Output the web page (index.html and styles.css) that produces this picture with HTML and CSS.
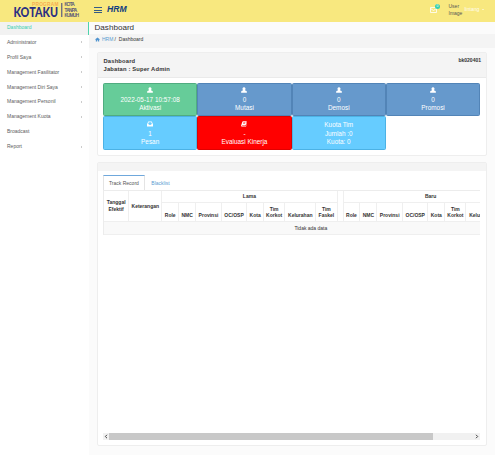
FILE: index.html
```html
<!DOCTYPE html>
<html lang="id">
<head>
    <meta charset="UTF-8">
    <meta name="viewport" content="width=device-width, initial-scale=1.0">
    <title>HRM - Dashboard</title>
    <link rel="stylesheet" href="styles.css">
</head>
<body>
    <!-- icons -->
    <svg width="0" height="0" class="defs">
        <symbol id="user" viewBox="0 0 12 12"><path d="M6 0.5a3 3.2 0 0 1 1.8 5.8L11 8q.8.6.8 3.7H.2Q.2 8.600 1 8l3.200-1.700A3 3.200 0 0 1 6 .5z"/></symbol>
        <symbol id="inbox" viewBox="0 0 12 12"><path fill-rule="evenodd" d="M2.500 1h7L12 6.500V11H0V6.500zM3.600 2.600L2 6.500h2l.8 1.700h2.400L8 6.500h2L8.400 2.600z"/></symbol>
        <symbol id="book" viewBox="0 0 12 12"><path fill-rule="evenodd" d="M4 .5h7.500L9.300 9H2.500q-.8.800 0 1.300h7.300L11.500 3l.5.8-2 7.700H1.800Q-.2 10.500.4 8.500L2.700 1.500Q3 .6 4 .5zM4.700 2.700l-.2.9h4.300l.2-.9zM4.200 4.700l-.2.9h4.300l.2-.9z"/></symbol>
        <symbol id="home" viewBox="0 0 12 12"><path d="M6 1l6 5-.7.800L10 5.800V11H7V7.500H5V11H2V5.800L.7 6.800 0 6z"/></symbol>
    </svg>

    <div class="page">
        <header class="topbar">
            <svg class="logo" width="89" height="21" viewBox="0 0 89 21">
                <text class="logo-program" x="32" y="6.300" textLength="26.500">PROGRAM</text>
                <text class="logo-name" x="13.500" y="17" textLength="44.500" lengthAdjust="spacingAndGlyphs">KOTAKU</text>
                <path class="logo-line" d="M61.800 3v14"/>
                <text class="logo-sub" x="64.500" y="6.300" textLength="10">KOTA</text>
                <text class="logo-sub" x="64.500" y="11.500" textLength="12.500">TANPA</text>
                <text class="logo-sub" x="64.500" y="16.700" textLength="14.500">KUMUH</text>
            </svg>
            <div class="burger"><i></i><i></i><i></i></div>
            <div class="brand">HRM</div>
            <div class="mail">
                <svg width="7" height="6" viewBox="0 0 7 6"><path d="M.5 .5h6v5h-6zM.5 1.500l3 2 3-2"/></svg>
                <span class="badge">0</span>
            </div>
            <div class="avatar">User Image</div>
            <div class="username">lintang <span class="caret"></span></div>
        </header>

        <div class="main">
            <nav class="sidebar">
                <a class="item active">Dashboard</a>
                <a class="item parent">Administrator</a>
                <a class="item parent">Profil Saya</a>
                <a class="item parent">Management Fasilitator</a>
                <a class="item parent">Management Diri Saya</a>
                <a class="item parent">Management Personil</a>
                <a class="item parent">Management Kuota</a>
                <a class="item">Broadcast</a>
                <a class="item parent">Report</a>
            </nav>

            <div class="content">
                <h1>Dashboard</h1>
                <div class="breadcrumb">
                    <svg width="5" height="5"><use href="#home"/></svg>
                    <a>HRM</a><span class="slash">/</span><span>Dashboard</span>
                </div>

                <section class="card profile">
                    <div class="card-head">
                        <div>Dashboard<br>Jabatan : Super Admin</div>
                        <div class="user-id">bk020401</div>
                    </div>
                    <div class="tiles">
                        <div class="tile green"><svg><use href="#user"/></svg><span>2022-05-17 10:57:08</span><span>Aktivasi</span></div>
                        <div class="tile blue"><svg><use href="#user"/></svg><span>0</span><span>Mutasi</span></div>
                        <div class="tile blue"><svg><use href="#user"/></svg><span>0</span><span>Demosi</span></div>
                        <div class="tile blue"><svg><use href="#user"/></svg><span>0</span><span>Promosi</span></div>
                        <div class="tile sky"><svg><use href="#inbox"/></svg><span>1</span><span>Pesan</span></div>
                        <div class="tile red"><svg><use href="#book"/></svg><span>-</span><span>Evaluasi Kinerja</span></div>
                        <div class="tile sky"><span>Kuota Tim</span><span>Jumlah :0</span><span>Kuota: 0</span></div>
                    </div>
                </section>

                <section class="card history">
                    <div class="history-head"></div>
                    <div class="history-body">
                        <div class="tabs">
                            <a class="tab current">Track Record</a>
                            <a class="tab">Blacklist</a>
                        </div>
                        <div class="table-wrap">
                            <table>
                                <colgroup>
                                    <col class="w25"><col class="w33">
                                    <col class="w17"><col class="w17"><col class="w26"><col class="w25"><col class="w17"><col class="w21"><col class="w31"><col class="w21">
                                    <col class="w6">
                                    <col class="w17"><col class="w17"><col class="w26"><col class="w25"><col class="w17"><col class="w21"><col class="w31"><col class="w21">
                                </colgroup>
                                <tr class="groups">
                                    <th rowspan="2" class="middle">Tanggal Efektif</th>
                                    <th rowspan="2" class="middle">Keterangan</th>
                                    <th colspan="8">Lama</th>
                                    <th rowspan="2"></th>
                                    <th colspan="8">Baru</th>
                                </tr>
                                <tr class="fields">
                                    <th>Role</th><th>NMC</th><th>Provinsi</th><th>OC/OSP</th><th>Kota</th><th>Tim Korkot</th><th>Kelurahan</th><th>Tim Faskel</th>
                                    <th>Role</th><th>NMC</th><th>Provinsi</th><th>OC/OSP</th><th>Kota</th><th>Tim Korkot</th><th>Kelurahan</th><th>Tim Faskel</th>
                                </tr>
                                <tr class="empty">
                                    <td colspan="19">Tidak ada data</td>
                                </tr>
                            </table>
                        </div>
                        <div class="scrollbar">
                            <svg width="6" height="7" viewBox="0 0 6 7"><path d="M4 1.800l-1.700 1.700 1.700 1.700"/></svg>
                            <div class="track"><div class="thumb"></div></div>
                            <svg width="6" height="7" viewBox="0 0 6 7"><path d="M2 1.800l1.700 1.700-1.700 1.700"/></svg>
                        </div>
                    </div>
                </section>
            </div>
        </div>
    </div>
</body>
</html>
```
FILE: styles.css
```css
* {
    box-sizing: border-box;
}

body {
    margin: 0;
    background: #fff;
    color: #333;
    font-family: "Liberation Sans", Arial, sans-serif;
    font-size: 5px;
    line-height: 6.5px;
    overflow: hidden;
}

.defs {
    display: block;
}

.page {
    width: 495px;
    height: 455px;
    overflow: hidden;
}

/* top bar */
.topbar {
    display: flex;
    height: 21.5px;
    background: #f8e87f;
}

.logo-program {
    font-size: 4.8px;
    fill: #f5ae52;
    font-weight: bold;
}

.logo-name {
    font-family: Lato, sans-serif;
    font-size: 12.3px;
    font-weight: 900;
    fill: #2b2f83;
}

.logo-sub {
    font-size: 4.5px;
    fill: #4a4a78;
    stroke: #4a4a78;
    stroke-width: 0.15;
}

.logo-line {
    stroke: #3b3d80;
    stroke-width: 1;
}

.burger {
    display: flex;
    flex-direction: column;
    gap: 1.6px;
    width: 18px;
    padding: 7px 5px 0;
}

.burger i {
    height: 1px;
    background: #345b85;
}

.brand {
    width: 323px;
    font-size: 8.6px;
    font-weight: bold;
    font-style: italic;
    line-height: 19px;
    color: #103d80;
}

.mail {
    position: relative;
    width: 18.5px;
    padding-top: 6.5px;
}

.mail svg {
    display: block;
    fill: none;
    stroke: #fff;
    stroke-width: 0.8;
}

.badge {
    position: absolute;
    left: 5px;
    top: 4px;
    width: 5px;
    height: 5px;
    border-radius: 50%;
    background: #36cfae;
    color: #fff;
    font-size: 3.5px;
    line-height: 5px;
    text-align: center;
}

.avatar {
    width: 16px;
    padding-top: 3px;
    line-height: 7px;
    color: #555;
}

.username {
    padding-top: 6px;
    color: #fffdf0;
}

.caret {
    display: inline-block;
    margin: 0 0 1px 1px;
    border: 1px solid transparent;
    border-top-color: #fff;
    border-bottom: 0;
}

.main {
    display: flex;
    height: 433.5px;
}

/* sidebar */
.sidebar {
    width: 89px;
    background: #fff;
}

.item {
    display: flex;
    justify-content: space-between;
    align-items: center;
    height: 14.95px;
    padding: 0 7px;
    color: #5c5c5c;
}

.item.active {
    height: 13px;
    padding-bottom: 2px;
    background: #f2f2f2;
    border-right: 1px solid #4fd3ab;
    color: #36cfae;
}

.parent::after {
    content: "";
    margin-right: 0.3px;
    border: 1.2px solid transparent;
    border-left: 1.6px solid #999;
    border-right: 0;
}

/* content */
.content {
    width: 406px;
    background: #fbfbfb;
}

h1 {
    height: 12px;
    margin: 0;
    padding-left: 5.500px;
    font-size: 8.1px;
    font-weight: normal;
    line-height: 11px;
}

.breadcrumb {
    display: flex;
    align-items: center;
    height: 14px;
    padding: 0 0 2px 6px;
    background: #f4f4f4;
}

.breadcrumb svg {
    margin-right: 2px;
    fill: #4f93cf;
}

.breadcrumb a {
    color: #5b9bd1;
}

.slash {
    margin: 0 3px 0 1px;
}

.card {
    width: 390px;
    margin-left: 8px;
    background: #fff;
    border: 1px solid #eee;
    border-radius: 2px;
}

.profile {
    height: 104px;
    margin-top: 4px;
}

.card-head {
    display: flex;
    justify-content: space-between;
    height: 25px;
    padding: 4px 5px 0 5.5px;
    background: #f4f4f4;
    border-bottom: 1px solid #eaeaea;
    font-size: 5.8px;
    font-weight: bold;
    letter-spacing: 0.17px;
    line-height: 8.3px;
}

.user-id {
    font-size: 5px;
    letter-spacing: 0;
    line-height: 7px;
}

.tiles {
    display: grid;
    grid-template-columns: repeat(4, 94.3px);
    grid-auto-rows: 33.9px;
    padding: 5px 5px;
}

.tile {
    display: flex;
    flex-direction: column;
    align-items: center;
    padding-top: 3.8px;
    border: 0.5px solid;
    border-radius: 1.5px;
    color: #fff;
    font-size: 6.4px;
    line-height: 8.5px;
}

.tile svg {
    width: 6px;
    height: 6px;
    margin: 0 0 2.5px;
    fill: #fff;
}

.green {
    background: #66cc99;
    border-color: #50ac80;
}

.blue {
    background: #6699cc;
    border-color: #5284b7;
}

.sky {
    background: #66ccff;
    border-color: #4cb2e5;
}

.red {
    background: #ff0000;
    border-color: #e00000;
}

/* history */
.history {
    height: 284px;
    margin-top: 6px;
}

.history-head {
    height: 8.500px;
    background: #f4f4f4;
}

.history-body {
    padding: 4px 5px 0;
}

.tabs {
    display: flex;
    height: 14.5px;
}

.tab {
    padding: 4.500px 6.500px 0;
    color: #5b9bd1;
}

.tab.current {
    padding: 3.500px 5px 0;
    border: 0.5px solid #e4e4e4;
    border-top: 1px solid #6fa8dc;
    border-bottom: 0;
    color: #555;
}

.table-wrap {
    width: 377px;
    height: 243.5px;
    overflow: hidden;
}

table {
    width: 415px;
    table-layout: fixed;
    border-collapse: separate;
    border-spacing: 0;
    border-top: 1px solid #ececec;
    border-left: 1px solid #ececec;
}

.w6 { width: 6px; }
.w17 { width: 16.9px; }
.w21 { width: 21.2px; }
.w25 { width: 25.300px; }
.w26 { width: 25.800px; }
.w31 { width: 31px; }
.w33 { width: 33px; }

th, td {
    padding: 0;
    border-right: 1px solid #efefef;
    border-bottom: 1px solid #efefef;
    text-align: center;
}

.groups {
    height: 12px;
}

.fields {
    height: 19.5px;
}

.fields th {
    padding-bottom: 2.5px;
    vertical-align: bottom;
}

.empty td {
    height: 12.5px;
    background: #f9f9f9;
}

.scrollbar {
    display: flex;
    width: 377px;
    height: 7px;
    background: #f1f1f1;
}

.scrollbar svg {
    fill: none;
    stroke: #444;
    stroke-width: 1;
}

.track {
    flex: 1;
}

.thumb {
    width: 324px;
    height: 7px;
    background: #c8c8c8;
}
```
